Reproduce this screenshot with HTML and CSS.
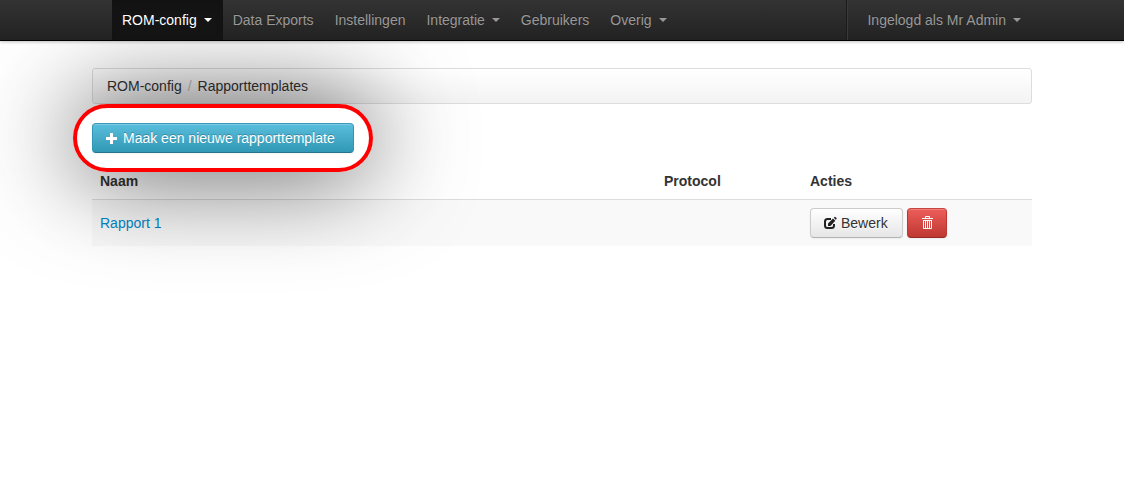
FILE: index.html
```html
<!DOCTYPE html>
<html lang="nl">
<head>
<meta charset="utf-8">
<title>Rapporttemplates</title>
<link rel="stylesheet" href="styles.css">
</head>
<body>
<header class="navbar">
  <div class="container navbar-inner">
    <nav class="nav">
      <a class="nav-link active" href="#">ROM-config<span class="caret"></span></a>
      <a class="nav-link" href="#">Data Exports</a>
      <a class="nav-link" href="#">Instellingen</a>
      <a class="nav-link" href="#">Integratie<span class="caret"></span></a>
      <a class="nav-link" href="#">Gebruikers</a>
      <a class="nav-link" href="#">Overig<span class="caret"></span></a>
    </nav>
    <div class="nav nav-user">
      <span class="divider"></span>
      <a class="nav-link" href="#">Ingelogd als Mr Admin<span class="caret"></span></a>
    </div>
  </div>
</header>
<main class="container">
  <nav class="breadcrumb">
    <a href="#">ROM-config</a><span class="slash">/</span><a href="#">Rapporttemplates</a>
  </nav>
  <div class="callout">
    <button class="btn btn-info" type="button">
      <svg class="icon" viewBox="0 0 14 14" aria-hidden="true"><path fill="#fff" d="M5 2h3v4h4v3H8v4H5V9H1V6h4z"/></svg>
      Maak een nieuwe rapporttemplate
    </button>
  </div>
  <table class="table">
    <thead>
      <tr><th class="col-name">Naam</th><th class="col-protocol">Protocol</th><th>Acties</th></tr>
    </thead>
    <tbody>
      <tr>
        <td><a class="link" href="#">Rapport 1</a></td>
        <td></td>
        <td>
          <div class="actions">
            <button class="btn btn-edit" type="button">
              <svg class="icon" viewBox="0 0 14 14" aria-hidden="true"><path fill="none" stroke="#222" stroke-width="2" d="M8 3H4.500Q2 3 2 5.500v4Q2 12 4.500 12h4Q11 12 11 9.500V8"/><path fill="#222" d="M5 10V7.500l5-5L12.300 4.800 7.500 10zM10.800 1.800l.8-.8q.4-.3.800 0l1.100 1.100q.3.400 0 .8l-.8.800z"/></svg>
              Bewerk
            </button>
            <button class="btn btn-danger" type="button" aria-label="Verwijder">
              <svg class="icon" viewBox="0 0 14 14" aria-hidden="true"><path fill="#fff" fill-rule="evenodd" d="M5 2V1q0-1 1-1h3q1 0 1 1v1h3v1H2V2zM6 1v1h3V1zM3 4h9v8q0 1-1 1H4q-1 0-1-1zM4 5v7h1V5zM6 5v7h1V5zM8 5v7h1V5zM10 5v7h1V5z"/></svg>
            </button>
          </div>
        </td>
      </tr>
    </tbody>
  </table>
</main>
</body>
</html>
```

FILE: styles.css
```css
* { box-sizing: border-box; }

body {
  min-height: 100vh;
  margin: 0;
  background: #fff;
  color: #333;
  font: 14px/20px "Liberation Sans", Arial, sans-serif;
}

a { color: inherit; text-decoration: none; }

.container {
  max-width: 940px;
  margin: 0 auto;
}

.navbar {
  position: relative;
  z-index: 2;
  background: linear-gradient(#333, #222);
  border-bottom: 1px solid #000;
  box-shadow: 0 1px 3px rgba(0, 0, 0, .25);
}

.navbar-inner {
  display: flex;
  justify-content: space-between;
  padding-left: 20px;
}

.nav { display: flex; }

.nav-link {
  display: flex;
  align-items: center;
  gap: 7px;
  padding: 10px 11px 10px 10px;
  color: #999;
  text-shadow: 0 -1px 0 rgba(0, 0, 0, .25);
}

.nav-link.active {
  color: #fff;
  background: #141414;
  box-shadow: inset 0 3px 8px rgba(0, 0, 0, .125);
}

.caret {
  border: 4px solid transparent;
  border-top-color: currentColor;
  border-bottom: 0;
}

.divider {
  margin: 0 9px;
  border-left: 1px solid #1b1b1b;
  border-right: 1px solid #3a3a3a;
}

.breadcrumb {
  display: flex;
  gap: 6px;
  margin: 27px 0 19px;
  padding: 7px 14px;
  border: 1px solid #ddd;
  border-radius: 3px;
  background: linear-gradient(#fff, #f3f3f3);
  text-shadow: 0 1px 0 #fff;
}

.slash { color: #bbb; }

.callout {
  position: relative;
  width: fit-content;
  margin-bottom: 10px;
}

/* Highlight ring drawn over the surrounding content */
.callout::after {
  content: "";
  position: absolute;
  inset: -19px;
  border: 4px solid #f00;
  border-radius: 34px;
  box-shadow: 0 0 100px rgba(0, 0, 0, .75);
  pointer-events: none;
}

.btn {
  display: flex;
  align-items: center;
  gap: 4px;
  margin: 0;
  padding: 4px 12px;
  border: 1px solid #ccc;
  border-bottom-color: #b3b3b3;
  border-radius: 4px;
  background: linear-gradient(#fff, #e6e6e6);
  box-shadow: inset 0 1px 0 rgba(255, 255, 255, .2), 0 1px 2px rgba(0, 0, 0, .05);
  color: #333;
  font: inherit;
  text-shadow: 0 1px 1px rgba(255, 255, 255, .75);
  white-space: nowrap;
  cursor: pointer;
}

.btn-edit { min-width: 93px; }

.btn-info {
  min-width: 262px;
  border-color: #3a9ab7 #2f96b4 #24748c;
  background: linear-gradient(#5bc0de, #2f96b4) border-box;
  color: #fff;
  text-shadow: 0 -1px 0 rgba(0, 0, 0, .25);
}

.btn-danger {
  min-height: 30px;
  border-color: #c8443e #bd362f #942a25;
  background: linear-gradient(#ee5f5b, #bd362f) border-box;
}

.icon {
  flex: none;
  width: 14px;
  height: 14px;
}

.table {
  width: 100%;
  border-collapse: separate;
  border-spacing: 0;
  table-layout: fixed;
}

.table th,
.table td {
  padding: 8px;
  text-align: left;
}

.table td {
  border-top: 1px solid #ddd;
  background: #f9f9f9;
}

.col-name { width: 60%; }
.col-protocol { width: 146px; }
.link { color: #08c; }

.actions {
  display: flex;
  gap: 4px;
}
```
